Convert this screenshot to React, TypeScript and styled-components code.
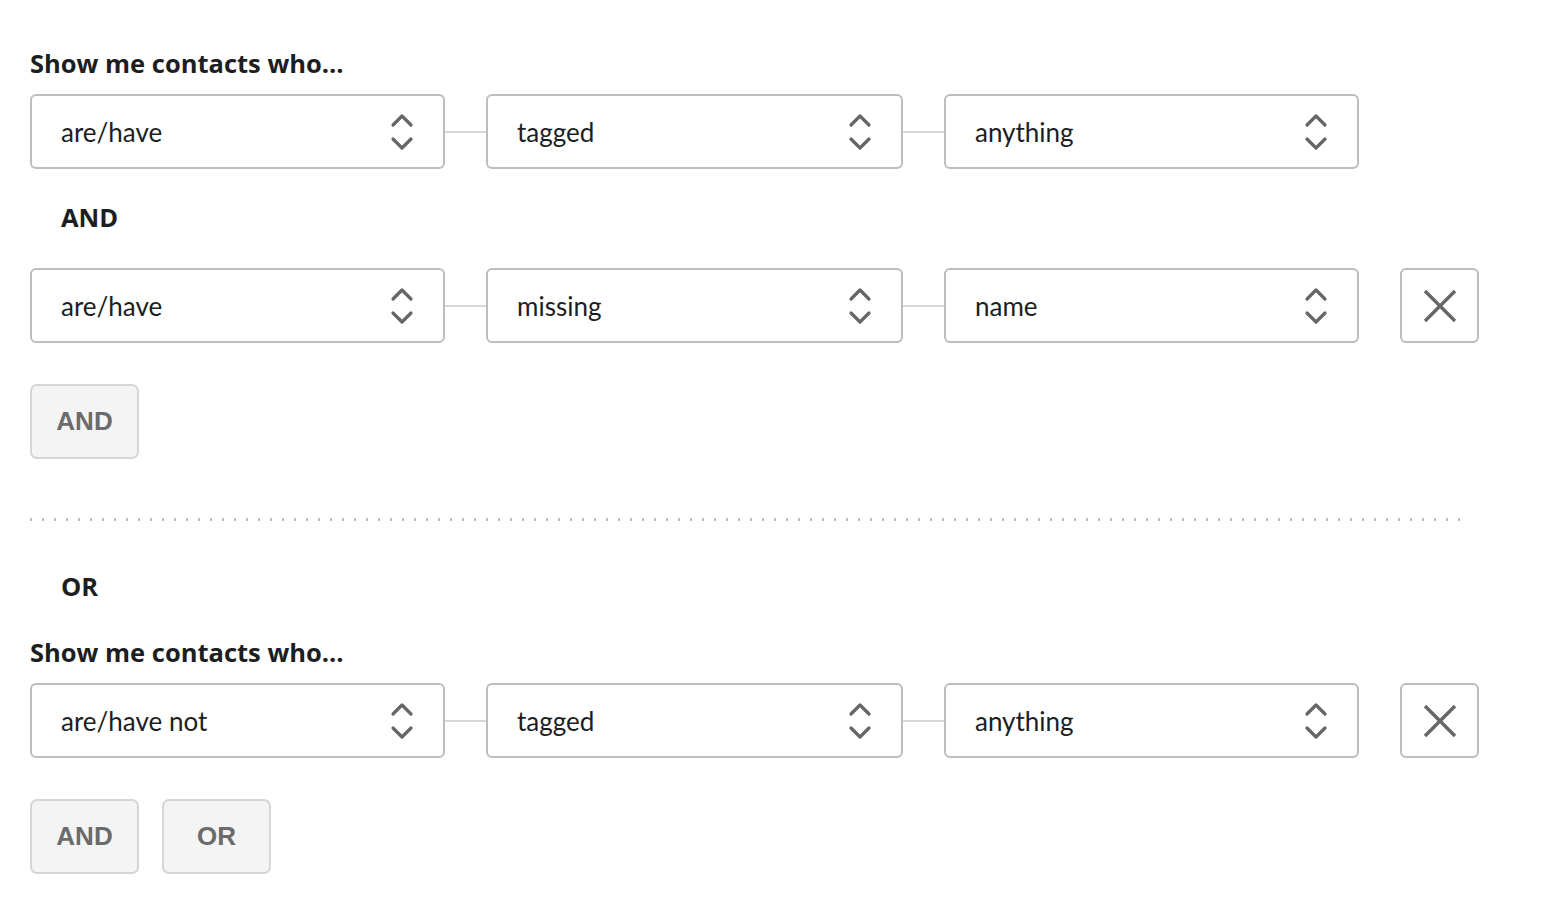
import styled, { createGlobalStyle } from "styled-components";

const GlobalStyle = createGlobalStyle`
  body {
    margin: 0;
    background: #fff;
    font-family: Lato, "Noto Sans", sans-serif;
    color: #1c1e21;
  }
`;

type Rule = { verb: string; action: string; target: string; removable?: boolean };

const Chevrons = () => (
  <svg width="24" height="38" viewBox="0 0 24 38" fill="none">
    <path d="M3 12 L12 3 L21 12" stroke="#666" strokeWidth="3.2" strokeLinecap="round" strokeLinejoin="round" />
    <path d="M3 26 L12 35 L21 26" stroke="#666" strokeWidth="3.2" strokeLinecap="round" strokeLinejoin="round" />
  </svg>
);

const Cross = () => (
  <svg width="34" height="34" viewBox="0 0 34 34" fill="none">
    <path d="M2 2 L32 32 M32 2 L2 32" stroke="#666" strokeWidth="3.4" />
  </svg>
);

const Select = ({ value, width }: { value: string; width: number }) => (
  <SelectBox $width={width}>
    <SelectText>{value}</SelectText>
    <Chevrons />
  </SelectBox>
);

const RuleRow = ({ rule }: { rule: Rule }) => (
  <Row>
    <Select value={rule.verb} width={415} />
    <Connector />
    <Select value={rule.action} width={417} />
    <Connector />
    <Select value={rule.target} width={415} />
    {rule.removable && (
      <RemoveButton>
        <Cross />
      </RemoveButton>
    )}
  </Row>
);

const App = () => {
  return (
    <>
      <GlobalStyle />
      <Page>
        <Heading>Show me contacts who...</Heading>
        <RuleRow rule={{ verb: "are/have", action: "tagged", target: "anything" }} />
        <Joiner $top={33} $bottom={36}>AND</Joiner>
        <RuleRow rule={{ verb: "are/have", action: "missing", target: "name", removable: true }} />
        <Buttons>
          <LogicButton>AND</LogicButton>
        </Buttons>
        <Divider />
        <Joiner $top={50} $bottom={36}>OR</Joiner>
        <Heading>Show me contacts who...</Heading>
        <RuleRow rule={{ verb: "are/have not", action: "tagged", target: "anything", removable: true }} />
        <Buttons>
          <LogicButton>AND</LogicButton>
          <LogicButton>OR</LogicButton>
        </Buttons>
      </Page>
    </>
  );
};

export default App;

const Page = styled.div`
  padding: 48px 0 30px 30px;
  display: flex;
  flex-direction: column;
  align-items: flex-start;
`;

const Heading = styled.div`
  font-family: "Open Sans", Lato, sans-serif;
  font-size: 25.5px;
  font-weight: 700;
  line-height: 30px;
  margin-bottom: 16px;
  color: #1c1e21;
`;

const Joiner = styled.div<{ $top: number; $bottom: number }>`
  font-family: "Open Sans", Lato, sans-serif;
  font-size: 25.5px;
  font-weight: 700;
  line-height: 30px;
  margin: ${({ $top, $bottom }) => `${$top}px 0 ${$bottom}px 31px`};
  color: #1c1e21;
`;

const Row = styled.div`
  display: flex;
  align-items: center;
  height: 75px;
`;

const SelectBox = styled.div<{ $width: number }>`
  width: ${({ $width }) => $width}px;
  height: 75px;
  box-sizing: border-box;
  border: 2px solid #bdbdbd;
  border-radius: 6px;
  display: flex;
  align-items: center;
  justify-content: space-between;
  padding: 0 29px 0 29px;
  background: #fff;
`;

const SelectText = styled.span`
  font-size: 26px;
  color: #1c1e21;
`;

const Connector = styled.div`
  width: 41px;
  height: 2px;
  background: #d8d8d8;
`;

const RemoveButton = styled.div`
  margin-left: 41px;
  width: 79px;
  height: 75px;
  box-sizing: border-box;
  border: 2px solid #bdbdbd;
  border-radius: 6px;
  display: flex;
  align-items: center;
  justify-content: center;
`;

const Buttons = styled.div`
  display: flex;
  gap: 23px;
  margin-top: 41px;
`;

const LogicButton = styled.div`
  width: 109px;
  height: 75px;
  box-sizing: border-box;
  border: 2px solid #d6d6d6;
  border-radius: 7px;
  background: #f4f4f4;
  display: flex;
  align-items: center;
  justify-content: center;
  font-family: "Liberation Sans", Arial, sans-serif;
  font-weight: 700;
  font-size: 26px;
  color: #6b6b6b;
`;

const Divider = styled.div`
  margin-top: 59px;
  width: 1440px;
  height: 3px;
  background-image: linear-gradient(to right, #bdbdbd 0 2px, transparent 2px);
  background-size: 12px 3px;
  background-repeat: repeat-x;
`;
